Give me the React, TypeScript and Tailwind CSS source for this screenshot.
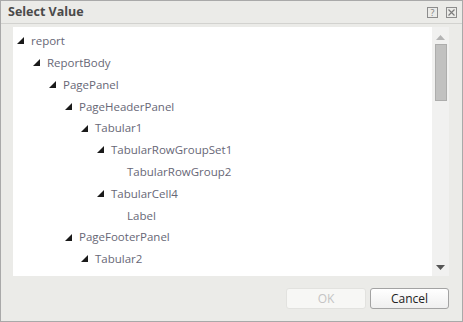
const nodes: { label: string; level: number; expanded: boolean }[] = [
  { label: 'report', level: 0, expanded: true },
  { label: 'ReportBody', level: 1, expanded: true },
  { label: 'PagePanel', level: 2, expanded: true },
  { label: 'PageHeaderPanel', level: 3, expanded: true },
  { label: 'Tabular1', level: 4, expanded: true },
  { label: 'TabularRowGroupSet1', level: 5, expanded: true },
  { label: 'TabularRowGroup2', level: 6, expanded: false },
  { label: 'TabularCell4', level: 5, expanded: true },
  { label: 'Label', level: 6, expanded: false },
  { label: 'PageFooterPanel', level: 3, expanded: true },
  { label: 'Tabular2', level: 4, expanded: true },
];

function Triangle() {
  return (
    <svg width="7" height="7" viewBox="0 0 7 7" className="shrink-0">
      <path d="M7 0 L7 7 L0 7 Z" fill="#1a1a1a" />
    </svg>
  );
}

export default function App() {
  return (
    <div
      className="w-[463px] h-[322px] bg-[#ebebe8] border border-[#a9a9a9] flex flex-col overflow-hidden"
      style={{ fontFamily: '"Open Sans", "Noto Sans", sans-serif' }}
    >
      {/* Title bar */}
      <div className="h-[23px] shrink-0 flex items-center justify-between pl-[7px] pr-[5px] border-b border-[#d2d2cf]">
        <span className="text-[12.5px] font-bold text-[#4a4a4a]">Select Value</span>
        <div className="flex items-center gap-[8px]">
          <span className="w-[11px] h-[11px] border border-[#8c8c8c] text-[#7c7c7c] text-[9px] leading-[9px] flex items-center justify-center">?</span>
          <span className="w-[11px] h-[11px] border border-[#8c8c8c] flex items-center justify-center">
            <svg width="7" height="7" viewBox="0 0 7 7">
              <path d="M0.5 0.5 L6.5 6.5 M6.5 0.5 L0.5 6.5" stroke="#7c7c7c" strokeWidth="1.2" />
            </svg>
          </span>
        </div>
      </div>

      {/* Tree panel */}
      <div className="mt-[3px] ml-[12px] mr-[13px] h-[249px] bg-white flex">
        <div className="flex-1 pt-[3px] overflow-hidden">
          {nodes.map((n) => (
            <div
              key={n.label}
              className="h-[21.8px] flex items-center"
              style={{ paddingLeft: 4 + n.level * 16 }}
            >
              <span className="w-[14px] flex items-center">{n.expanded ? <Triangle /> : null}</span>
              <span className="text-[11.5px] text-[#676776]">{n.label}</span>
            </div>
          ))}
        </div>
        {/* Scrollbar */}
        <div className="w-[17px] bg-[#f1f1f0] flex flex-col items-center">
          <svg width="9" height="5" viewBox="0 0 9 5" className="mt-[8px]">
            <path d="M4.5 0 L9 5 L0 5 Z" fill="#b4b4b4" />
          </svg>
          <div className="mt-[4px] w-[12px] h-[57px] bg-[#c1c1c0] border border-[#adadac]" />
          <div className="flex-1" />
          <svg width="9" height="5" viewBox="0 0 9 5" className="mb-[6px]">
            <path d="M0 0 L9 0 L4.5 5 Z" fill="#555" />
          </svg>
        </div>
      </div>

      {/* Buttons */}
      <div className="flex justify-end gap-[4px] pr-[13px] mt-[12px]">
        <button className="w-[80px] h-[21px] rounded-[3px] bg-[#f7f7f5] border border-[#e2e2df] text-[12px] text-[#c4c4c4]">
          OK
        </button>
        <button className="w-[79px] h-[21px] rounded-[3px] bg-gradient-to-b from-white to-[#efefef] border border-[#a3a3a3] text-[12px] text-[#222]">
          Cancel
        </button>
      </div>
    </div>
  );
}
